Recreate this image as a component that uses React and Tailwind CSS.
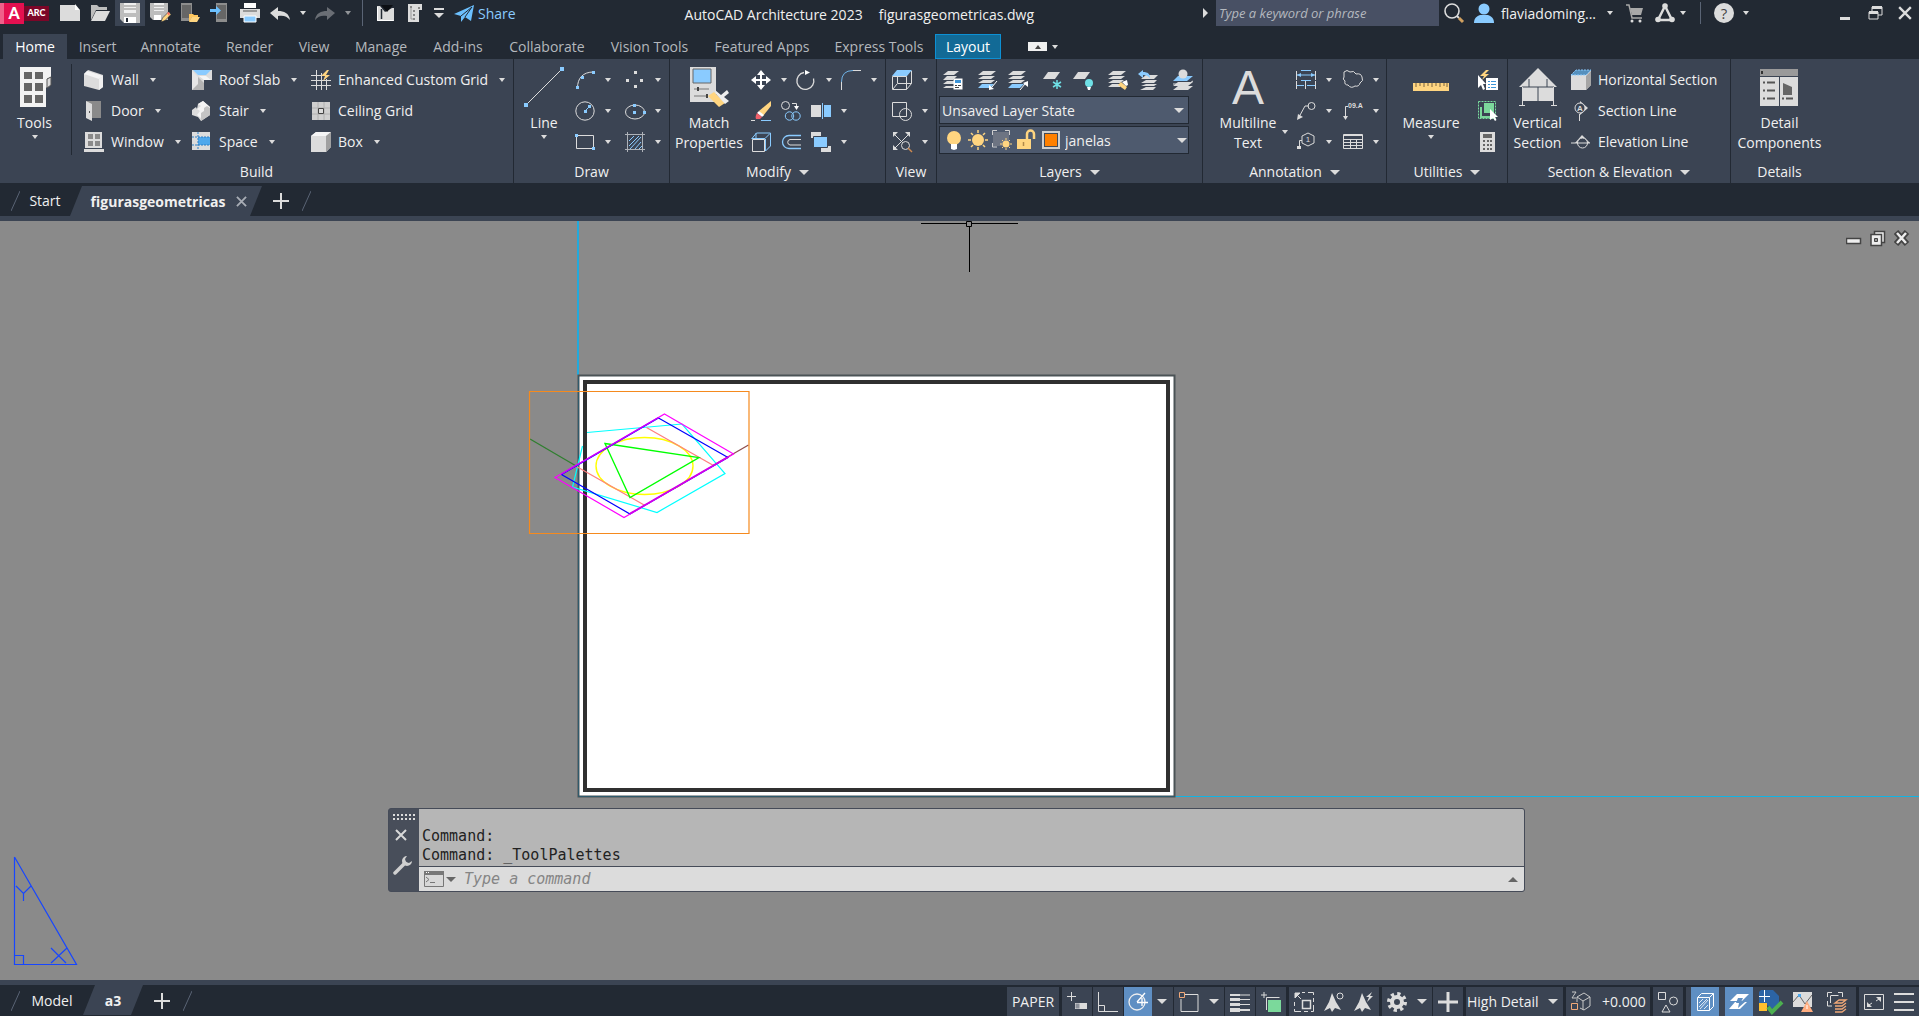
import { useState } from 'react';

const L = '#dcdcdc';
const B = '#8acbff';
const Y = '#ffd580';

// Small drawings, all on a 20 x 20 grid
const ICONS = {
    newFile: (
        <g>
            <path d="M0 2h15v5h5v11H0z" fill={L} />
            <path d="M15 1l5 6h-5z" fill="#fff" />
        </g>
    ),
    open: (
        <g>
            <path d="M1 17V2h6l2 2h8v3H6z" fill="#bdbdbd" />
            <path d="M6 8h14l-5 10H1z" fill={L} />
        </g>
    ),
    save: (
        <g>
            <path d="M0 0h20v20H4l-4-4z" fill="#bdbdbd" />
            <path d="M4 0h12v10H4z" fill="#efefef" />
            <path d="M4 3h12M4 6h12" stroke="#8b8b8b" />
            <path d="M4 14h12v6H4z" fill="#fff" />
            <path d="M6 15h2v4H6z" fill="#222933" />
        </g>
    ),
    saveAs: (
        <g>
            <path d="M0 0h18v17H3l-3-3z" fill="#bdbdbd" />
            <path d="M4 0h10v8H4z" fill="#efefef" />
            <path d="M4 3h10M4 6h10" stroke="#8b8b8b" />
            <path d="M4 12h7v5H4z" fill="#fff" />
            <path d="M11 19l1.500-4 6-6 2.500 2.500-6 6z" fill={Y} stroke="#222933" strokeWidth=".6" />
            <path d="M17 10l2-1 1 2-1.500 1.500z" fill="#ff6f61" />
        </g>
    ),
    openDevice: (
        <g>
            <path d="M1 0h11v18H1z" fill="#8d8d8d" />
            <path d="M2 2h9v13H2z" fill="#666" />
            <path d="M9 11h4l1 1h4v2h-6l-3 5z" fill="#ffc75e" />
            <path d="M12 14h8l-3 5H9z" fill={Y} />
        </g>
    ),
    saveDevice: (
        <g>
            <path d="M6 0h11v19H6z" fill="#8d8d8d" />
            <path d="M7 2h9v14H7z" fill="#666" />
            <path d="M0 6h6V3l5 4.500L6 12V9H0z" fill="#6cc0ff" />
        </g>
    ),
    print: (
        <g>
            <path d="M4 0h12v5H4z" fill="#fff" />
            <path d="M0 6h20v9H0z" fill={L} />
            <path d="M3 8h14" stroke="#555" />
            <path d="M4 13h12v6H4z" fill={B} stroke="#fff" />
        </g>
    ),
    undo: <path d="M0 10l8-6v4c6 0 11 2 12 9-3-4-7-5-12-4v4z" fill={L} />,
    redo: <path d="M20 10l-8-6v4C6 8 1 10 0 17c3-4 7-5 12-4v4z" fill="#6a6e75" />,
    book: (
        <g>
            <path d="M2 3h3l5 6 7-4h2v13H2z" fill={L} />
            <path d="M6 2h12l-6 7z" fill="#0c0f14" />
            <path d="M6.500 6v10" stroke="#222933" strokeWidth="1.500" />
            <path d="M2.500 4v13.500h16" stroke="#fff" fill="none" />
        </g>
    ),
    sheet: (
        <g>
            <path d="M3 1h14v6h-3v12H3z" fill={L} />
            <path d="M5 3h2v2H5zM8 7h2v2H8zM8 11h2v2H8zM8 15h2v2H8zM13 4h2v2h-2z" fill="#888" />
            <path d="M6 5v11h2" stroke="#999" fill="none" />
        </g>
    ),
    share: (
        <g>
            <path d="M0 10L20 1l-3 16-6-4-4 5v-6z" fill="#6cc0ff" />
            <path d="M7 12L18 3l-7 10" stroke="#222933" fill="none" />
        </g>
    ),
    search: (
        <g>
            <circle cx="8" cy="8" r="7" fill="none" stroke={L} strokeWidth="1.600" />
            <path d="M13 13l2 2" stroke={L} strokeWidth="2" />
            <path d="M15 15l4 4" stroke="#d0a060" strokeWidth="3" />
        </g>
    ),
    user: (
        <g fill={B}>
            <circle cx="10" cy="6" r="5.500" />
            <path d="M0 20c0-5 3-7 6-8h8c3 1 6 3 6 8z" />
        </g>
    ),
    cart: (
        <g>
            <path d="M1 2h3l3 13h10" stroke="#a8a8a8" fill="none" strokeWidth="1.500" />
            <path d="M5 5h13l-2 7H7z" fill="#a8a8a8" />
            <circle cx="7" cy="18" r="1.500" fill={L} />
            <circle cx="15" cy="18" r="1.500" fill={L} />
        </g>
    ),
    triad: (
        <g>
            <path d="M10 3L3 17h14z" fill="none" stroke={L} strokeWidth="2.500" />
            <circle cx="10" cy="3" r="2.800" fill={L} />
            <circle cx="3" cy="16.500" r="2.800" fill={L} />
            <circle cx="17" cy="16.500" r="2.800" fill={L} />
        </g>
    ),
    help: (
        <g>
            <circle cx="10" cy="10" r="10" fill={L} />
            <text x="10" y="15.500" textAnchor="middle" fontFamily="Open Sans" fontSize="15" fill="#444">?</text>
        </g>
    ),
    wall: (
        <g>
            <path d="M0 4L4 0l15 5v12l-4 3-15-4z" fill={L} />
            <path d="M0 4l3-3 16 5-4 3z" fill="#f5f5f5" />
            <path d="M15 9l4-3v11l-4 3z" fill="#f0f0f0" />
        </g>
    ),
    door: (
        <g>
            <path d="M2 0h15v17H8z" fill="#8a8a8a" />
            <path d="M2 0l6 3v17l-6-3z" fill={L} />
            <path d="M5 10h1v2H5z" fill="#555" />
        </g>
    ),
    window: (
        <g>
            <path d="M1 0h17v16H1z" fill={L} />
            <path d="M4 2h5v5H4zM11 2h5v5h-5zM4 9h5v5H4zM11 9h5v5h-5z" fill="#8a8a8a" />
            <path d="M0 17h20v3H0z" fill={L} />
        </g>
    ),
    roof: (
        <g>
            <path d="M0 0h20v10h-8v10H0z" fill={L} />
            <path d="M1 0h18l-5 5H6z" fill={B} />
            <path d="M6 7l6 6v7H0z" fill="#b4b4b4" />
            <path d="M0 1l6 6v7l-6 6z" fill="#e6e6e6" />
            <path d="M7 6h7l5 4h-7z" fill="#f5f5f5" />
        </g>
    ),
    stair: (
        <g>
            <path d="M0 9l4-3 1 2 1-5 5-3 7 6v8l-9 6-3-4-6-2z" fill={L} />
            <path d="M11 0l-5 3 3 2-4 3 3 2-3 4 4 3 9-6V6z" fill="#f4f4f4" />
            <path d="M9 12l3-2V7l3-2 3 2v7l-9 6z" fill="#c4c4c4" />
        </g>
    ),
    space: (
        <g>
            <path d="M0 0h18v18H0z" fill={L} />
            <path d="M6 5h12v8H6z" fill="#4fa8ec" />
            <path d="M6 0v18M0 5h18M0 13h18" stroke="#2e7fc4" strokeDasharray="2 1" />
        </g>
    ),
    customGrid: (
        <g>
            <path d="M5.500 0v20M10.500 3v17M15.500 9v11M0 5.500h12M0 10.500h20M0 15.500h20" stroke={L} />
            <path d="M16 0l-6 6h4l-2 5 7-6h-4l3-5z" fill={Y} />
        </g>
    ),
    ceiling: (
        <g>
            <path d="M1 1h18v18H1z" fill="#cfcfcf" />
            <path d="M7 1v18M13 1v18M1 7h18M1 13h18" stroke="#b0b0b0" />
            <path d="M7.500 7.500h5v5h-5z" fill="#ddd" stroke="#444" />
        </g>
    ),
    box: (
        <g>
            <path d="M0 4l5-4h15v15l-5 5H0z" fill={L} />
            <path d="M0 4l5-4h15l-5 4z" fill="#f5f5f5" />
            <path d="M15 4l5-4v15l-5 5z" fill="#a0a0a0" />
        </g>
    ),
    arc: (
        <g>
            <path d="M2.500 18C2.500 8 8 2 18.500 2" stroke={L} fill="none" />
            <path d="M1 16h3v3H1zM6 6h3v3H6zM17 1h3v3h-3z" fill={B} />
        </g>
    ),
    points: <path d="M9 1h3v3H9zM1 9h3v3H1zM15 9h3v3h-3zM9 15h3v3H9z" fill={L} />,
    circle: (
        <g>
            <circle cx="10" cy="10" r="9.200" stroke={L} fill="none" />
            <path d="M10 10l4-4" stroke={B} />
            <path d="M9 9h3v3H9zM13 4h3v3h-3z" fill={B} />
        </g>
    ),
    ellipse: (
        <g>
            <ellipse cx="10" cy="11" rx="9.500" ry="7" stroke={L} fill="none" />
            <path d="M8 3h3v3H8zM8 10h3v3H8zM18 10h3v3h-3z" fill={B} />
        </g>
    ),
    rect: (
        <g>
            <path d="M1.500 3.500h17v13h-17z" stroke={L} fill="none" />
            <path d="M0 2h3v3H0zM17 15h3v3h-3z" fill={B} />
        </g>
    ),
    hatch: (
        <g>
            <path d="M2.500 0v20M17.500 0v20M0 2.500h20M0 17.500h20" stroke="#aeb2b8" />
            <path d="M4 9l5-5M4 14L14 4M5 17L16 5M10 17l6-7M14 17l3-3" stroke={B} />
        </g>
    ),
    move: <path d="M10 0l4 5h-3v4h4V6l5 4-5 4v-3h-4v4h3l-4 5-4-5h3v-4H5v3l-5-4 5-4v3h4V5H6z" fill="#fff" />,
    rotate: (
        <g>
            <path d="M8 2.500a8.500 8.500 0 1 0 9.500 6" stroke={L} fill="none" strokeWidth="1.300" />
            <path d="M9 0l5 2.500L9 5z" fill="#fff" />
        </g>
    ),
    fillet: (
        <g fill="none">
            <path d="M.5 20v-8M12 .5h8" stroke={L} />
            <path d="M.5 12Q.5 .5 12 .5" stroke="#6fb4e8" />
        </g>
    ),
    erase: (
        <g>
            <path d="M8 10l12-10v5L12 15z" fill={Y} />
            <path d="M8 10l5 4-2 2-5-4z" fill="#fff" />
            <path d="M6 12l5 4-2 2H5c-1-2 0-4 1-6z" fill="#f0606a" />
            <path d="M0 19.500h4" stroke={L} />
            <path d="M10 19.500h10" stroke={B} />
        </g>
    ),
    copy: (
        <g fill="none">
            <circle cx="4.500" cy="4.500" r="4" stroke={L} />
            <path d="M11 2.500h4.500V6" stroke={L} />
            <path d="M13 5h5l-2.500 4z" fill="#fff" />
            <circle cx="8.500" cy="15" r="4.200" stroke={B} />
            <circle cx="15" cy="15" r="4.200" stroke={B} />
        </g>
    ),
    mirror: (
        <g>
            <path d="M0 4h10v12H0z" fill={L} />
            <path d="M13 4h7v12h-7z" fill={B} />
            <path d="M11.500 2v16" stroke={B} />
        </g>
    ),
    boxEdge: (
        <g fill="none">
            <path d="M1.500 7.500h12v12h-12z" stroke={L} />
            <path d="M.5 7l5-6h14v13l-5 5M1 6.500h13l5-5M14.500 7v12M5 1v5" stroke={B} />
        </g>
    ),
    offset: (
        <g fill="none">
            <path d="M20 3.500H8a6.500 6.500 0 0 0 0 13h12" stroke={B} strokeWidth="1.300" />
            <path d="M20 7.500H9a2.800 2.800 0 0 0 0 5.500h11" stroke={L} />
        </g>
    ),
    order: (
        <g>
            <path d="M0 0h10v6H0zM10 14h10v6H10z" fill={L} />
            <path d="M2.500 4.500h14v11h-14z" fill={B} stroke="#3b4453" />
        </g>
    ),
    viewCube: (
        <g>
            <path d="M.5 6.500h14v13H.5zM14.500 19.500l5-6V1M5.500 6v7.500h14M5 14l-4 5" stroke={L} fill="none" />
            <path d="M0 6l5-6h15l-5 6z" fill={B} />
        </g>
    ),
    shapes: (
        <g fill="none" stroke={L}>
            <path d="M.5 1.500h14v14H.5z" />
            <circle cx="13.500" cy="13.500" r="6" />
        </g>
    ),
    zoomAll: (
        <g>
            <path d="M2 2l14 14M17 2L3 16" stroke={L} />
            <path d="M1 0h5L1 5zM18 0h-5l5 5zM1 18h5l-5-5z" fill={L} />
            <circle cx="13.500" cy="13.500" r="4" stroke={L} fill="#3b4453" />
            <path d="M16 16l4 4" stroke="#d08a50" strokeWidth="1.500" />
        </g>
    ),
    layerProps: (
        <g>
            <path d="M5 1h11l-5 4H0zM4 6h10l-4 4H0zM4 11h7v3H0zM3 16h8v2H0z" fill={L} />
            <path d="M10.500 8.500h9v11h-9z" fill="#fff" />
            <path d="M12 10h6v3h-6z" fill="#3d94d6" />
            <path d="M12 15.500h2M15 15.500h3M12 17.500h4" stroke="#444" />
        </g>
    ),
    layerIn: (
        <g>
            <path d="M5 1h13l-5 4H0zM5 6h12l-4 3H0zM5 10h12l-4 3H0z" fill={L} />
            <path d="M4 14h12l-4 4H0z" fill={B} />
            <path d="M19 11l-5 6" stroke="#fff" />
            <path d="M11 20v-5l5 4z" fill="#fff" />
        </g>
    ),
    layerOut: (
        <g>
            <path d="M5 1h13l-5 4H0zM5 6h12l-4 3H0zM5 10h12l-4 3H0z" fill={L} />
            <path d="M4 14h12l-4 4H0z" fill={B} />
            <path d="M12 20l5-6" stroke="#fff" />
            <path d="M20 11v6l-5-4z" fill="#fff" />
        </g>
    ),
    layerFreeze: (
        <g>
            <path d="M5 2h12l-5 7H0z" fill={L} />
            <path d="M14 10v9M10 12l8 5M18 12l-8 5" stroke="#6fe0e6" strokeWidth="1.500" />
        </g>
    ),
    layerOff: (
        <g>
            <path d="M5 2h12l-5 7H0z" fill={L} />
            <circle cx="16" cy="13" r="4" fill="#6fe0e6" />
            <path d="M14 17h4l-1 3h-2z" fill="#fff" />
        </g>
    ),
    layerMatch: (
        <g>
            <path d="M5 1h13l-5 4H0zM5 6h12l-4 3H0zM5 10h11l-4 3H0zM4 14h8v3H0z" fill={L} />
            <path d="M10 15l3-3 6 5-2 3z" fill={Y} />
            <path d="M14 12l5-2 1 5-2 1z" fill="#fff" />
        </g>
    ),
    layerPrev: (
        <g>
            <path d="M8 5h12l-4 4H3zM8 10h11l-3 3H3zM8 14h11l-3 2H3zM8 17h10l-3 3H2z" fill={L} />
            <path d="M0 4l5-4v2c5 0 7 2 7 6-2-2-4-3-7-3v3z" fill={B} />
        </g>
    ),
    layerCurrent: (
        <g>
            <path d="M5 12h15l-5 4H0zM5 16h15l-5 4H0z" fill={L} />
            <path d="M5 6h15l-6 5H0z" fill={B} />
            <path d="M0 14h15l5-3" stroke={L} fill="none" />
            <circle cx="10" cy="4" r="4.500" fill={L} />
        </g>
    ),
    bulb: (
        <g>
            <circle cx="10" cy="8" r="7" fill={Y} />
            <path d="M7 14h6v5l-3 1-3-1z" fill="#fff" />
        </g>
    ),
    sun: (
        <g>
            <circle cx="10" cy="10" r="6" fill={Y} />
            <path d="M10 0v3M10 17v3M0 10h3M17 10h3M3 3l2 2M15 15l2 2M17 3l-2 2M5 15l-2 2" stroke={Y} strokeWidth="1.500" />
        </g>
    ),
    vpFreeze: (
        <g>
            <path d="M1 2h16v14H1z" fill="#6d7482" />
            <path d="M.5 5V.5H5M13 .5h4.500V5M.500 13v4H5" stroke="#cfcfcf" fill="none" />
            <circle cx="14" cy="14" r="3.500" fill={Y} />
            <path d="M14 8v2M14 18v2M8 14h2M18 14h2M10 10l1 1M17 17l1 1M18 10l-1 1M11 17l-1 1" stroke={Y} />
        </g>
    ),
    lock: (
        <g>
            <path d="M1 9h14v10H1z" fill={Y} />
            <path d="M11 9V4a3 3 0 0 1 7 0v5" stroke={Y} strokeWidth="2.500" fill="none" />
            <path d="M7.500 12v4" stroke="#b0894a" strokeWidth="1.500" />
        </g>
    ),
    dim: (
        <g>
            <path d="M.5 1v9M19.500 1v9M.5 11v8M9.500 11v8M19.500 11v8" stroke={L} />
            <path d="M1 5h18M1 15.500h7M11 15.500h8M5 .5h10M5 10.500h10" stroke={B} />
            <path d="M1 5l4-2v4zM19 5l-4-2v4z" fill={B} />
        </g>
    ),
    cloud: (
        <path
            d="M1 2q3-3 6 0q4-2 6 2q5-1 6 3q2 4-2 6q-1 4-5 3q-4 3-7-1q-4 0-3-4q-3-2-1-4z"
            stroke={L}
            fill="none"
        />
    ),
    leader: (
        <g>
            <path d="M3 16L9 5h4" stroke={L} fill="none" />
            <circle cx="15.500" cy="5" r="3.500" stroke={L} fill="none" />
            <path d="M1 19l1-6 5 3z" fill={L} />
        </g>
    ),
    keynote: (
        <g>
            <path d="M5 5.500H2.500V17" stroke={L} fill="none" />
            <path d="M0 15h5l-2.500 4z" fill={L} />
            <text x="5" y="7" fontFamily="Liberation Sans" fontWeight="bold" fontSize="7" fill={L}>09.A</text>
        </g>
    ),
    tag: (
        <g>
            <path d="M12 1l6 3v7l-6 3-6-3V4zM6 8.500H3.500V16" stroke={L} fill="none" />
            <path d="M1 14h4v3H1z" fill={L} />
            <text x="12" y="10" textAnchor="middle" fontFamily="Liberation Sans" fontSize="8" fill={L}>1</text>
        </g>
    ),
    table: (
        <g fill="none" stroke={L}>
            <path d="M.5 2.500h19v14H.5zM.5 7.500h19M.5 10.500h19M.5 13.500h19M7.500 7v10M13.500 7v10" />
            <path d="M0 3.500h20" />
        </g>
    ),
    quickSelect: (
        <g>
            <path d="M8 0L2 6h4L4 10l7-6H7l4-4z" fill={Y} />
            <path d="M0 5v13l3-3 2 5 2-1-2-5h3z" fill="#fff" />
            <path d="M8 8h12v12H8z" fill="#fff" />
            <path d="M10 11.500h2M10 14.500h2M10 17.500h2M13 11.500h5M13 14.500h5M13 17.500h5" stroke="#3d94d6" />
        </g>
    ),
    selectAll: (
        <g>
            <path d="M.5 .5h17v17H.5z" stroke="#7be0a0" strokeDasharray="2 1" fill="none" />
            <path d="M6 2h10v10H6z" fill="#7bd99b" />
            <path d="M3 6v10h10" stroke="#7bd99b" strokeWidth="2" fill="none" />
            <path d="M12 8v11l3-2 2 3 1.500-1-1.500-3h3z" fill="#fff" />
        </g>
    ),
    calc: (
        <g>
            <path d="M2 0h15v20H2z" fill={L} />
            <path d="M5 2h9v4H5z" fill="#666" />
            <path d="M5 8h2v2H5zM9 8h2v2H9zM12 8h2v2h-2zM5 12h2v2H5zM9 12h2v2H9zM12 12h2v2h-2zM5 16h2v2H5zM9 16h2v2H9zM12 16h2v2h-2z" fill="#666" />
        </g>
    ),
    hSection: (
        <g>
            <path d="M0 5h15l5-5v15l-5 5H0z" fill={L} />
            <path d="M0 5l5-5h15l-5 5z" fill="#5590bd" stroke={B} strokeDasharray="2 1" />
            <path d="M15 6l5-5v14l-5 5z" fill="#a5a5a5" />
        </g>
    ),
    sectionLine: (
        <g>
            <path d="M9 0l8 7-8 7z" fill={L} />
            <circle cx="9" cy="7" r="5" fill="#3b4453" stroke={L} />
            <text x="9" y="10" textAnchor="middle" fontFamily="Liberation Sans" fontWeight="bold" fontSize="8" fill={L}>A</text>
            <path d="M8.500 13v7" stroke={L} />
        </g>
    ),
    elevationLine: (
        <g>
            <path d="M4 11L11 3l8 8z" fill={L} />
            <circle cx="11.500" cy="11" r="5" stroke={L} fill="#3b4453" />
            <path d="M0 11h19" stroke={L} />
        </g>
    ),
    coords: (
        <g>
            <path d="M4.500 0v9M0 4.500h9" stroke={L} />
            <path d="M8 11h12v6H8z" fill={L} />
            <path d="M8.500 11.500h4v5h-4z" fill="#8a8f98" />
        </g>
    ),
    ortho: <path d="M.5 0v19.500H20M.5 13.500h6v6" stroke={L} fill="none" />,
    polar: (
        <g>
            <circle cx="9" cy="10" r="8" stroke="#eee" fill="none" strokeWidth="1.300" />
            <path d="M9 10.500h11M9 10l8-9M14 6v8" stroke="#fff" strokeWidth="1.300" />
        </g>
    ),
    osnap: (
        <g fill="none">
            <path d="M6 2.500h13v17H2V7" stroke={L} />
            <path d="M.5 .5h5v5h-5z" stroke="#f0a878" />
        </g>
    ),
    lineweight: (
        <g fill={L}>
            <path d="M0 2h10v2H0zM10 2.500h10v1H10zM0 6h10v3H0zM10 7h10v1H10zM0 11h10v3H0zM10 12h10v1H10zM0 16h10v4H0zM10 17h10v2H10z" />
        </g>
    ),
    cycling: (
        <g>
            <path d="M3 0v6M0 3h6M5.500 18V5.500h13" stroke={L} fill="none" />
            <path d="M7 8h13v12H7z" fill="#7bd99b" />
        </g>
    ),
    annoScale: (
        <g fill="none" stroke={L}>
            <path d="M8 .5h3M14 .5h5.500V3M19.500 6v4M19.500 13v6.500H17M14 19.500h-4M7 19.500H.5V17M.5 14v-4" />
            <path d="M8.500 8.500h8v8h-8z" strokeWidth="1.500" />
            <path d="M2 2l5 5" />
            <path d="M1 1h5L1 6z" fill={L} />
        </g>
    ),
    annoVisible: (
        <g>
            <path d="M8 1l4 9 5 8-6-2-3 4-2-4-6 3 5-9z" fill={L} />
            <circle cx="16" cy="4" r="3" stroke={L} fill="none" />
        </g>
    ),
    annoAuto: (
        <g>
            <path d="M8 1l4 9 5 8-6-2-3 4-2-4-6 3 5-9z" fill={L} />
            <path d="M18 0l-6 5h3l-2 5 6-6h-3z" fill={L} />
        </g>
    ),
    gear: (
        <g>
            <circle cx="10" cy="10" r="8" fill="none" stroke={L} strokeWidth="4" strokeDasharray="3.140 3.140" />
            <circle cx="10" cy="10" r="5" fill="none" stroke={L} strokeWidth="4" />
        </g>
    ),
    plus: <path d="M10 0v20M0 10h20" stroke={L} strokeWidth="3" />,
    elevation: (
        <g fill="none" stroke="#c8c8c8">
            <path d="M6 5l7-4 6 4v9l-6 4-4-2M6 5l6 4 7-4M12 9v9M6 5v5" />
            <path d="M1 0h4L1 6h4" />
            <path d="M.5 11.500h6v6h-6z" stroke="#f0a878" />
        </g>
    ),
    isolate: (
        <g fill="none" stroke={L}>
            <path d="M.5 .5h7v7h-7zM8 13l4 7H4z" />
            <circle cx="15.500" cy="9" r="4" />
        </g>
    ),
    surface: (
        <g>
            <path d="M2.500 5.500h12v13h-12zM2.500 5.500l4-4h12v13l-4 4M14.500 5.500l4-4" stroke="#fff" fill="none" />
            <path d="M4 11l4-4M4 15l8-8M5 17l8-9M9 17l4-4" stroke="#dfe9f5" />
        </g>
    ),
    xref: (
        <g>
            <path d="M8 2h12l-7 7H1z" fill="#fff" />
            <path d="M6 10h12l-7 7H0z" fill="#fff" />
            <path d="M9 6h5l-2 4h4l-7 6 1-5H7z" fill="#5f8fc3" />
        </g>
    ),
    trusted: (
        <g>
            <path d="M2-2h12l6 6v8l-7 5-5-4H0V0z" fill="#2c64a5" />
            <path d="M5.500-2v12M0 4.500h11" stroke="#fff" />
            <path d="M0 11h8v8H0z" fill="#ffc02e" />
            <path d="M9 15l4 5 10-10" stroke="#4caf50" strokeWidth="4" fill="none" />
        </g>
    ),
    graph: (
        <g>
            <path d="M0 0h19v15H0z" fill={L} />
            <path d="M0 10l6-7 6 9 7-9" stroke="#666" fill="none" />
            <path d="M5 2h3v3H5z" fill="#4fa8ec" />
            <path d="M14 9l6 11H8z" fill="#ffad80" />
            <path d="M14 13v4" stroke="#fff" />
        </g>
    ),
    layout: (
        <g fill="none">
            <path d="M5 .5H.5V5M11 .5h4.500V5M.5 9v5H5M3.500 4v7M3.500 3.500h8" stroke={L} />
            <path d="M12 8h7l-4 3H8zM8 14h7l4-3M8 17h7l4-3M8 20h7l4-3" stroke="#f0a878" strokeWidth="1.300" />
        </g>
    ),
    fullscreen: (
        <g>
            <path d="M.5 2.500h19v15H.5z" stroke={L} fill="none" />
            <path d="M12 5h5v5zM3 10v5h5z" fill={L} />
            <path d="M5 13l3-2M15 7l-3 2" stroke={L} />
        </g>
    ),
    menu: <path d="M0 2h20M0 10h20M0 18h20" stroke={L} strokeWidth="2" />,
};

// Large drawings, 40 x 40 grid
const BIG = {
    tools: (
        <g>
            <path d="M5 0h31v10l-4 2v9l-1-1v20H5z" fill="#f3f3f3" />
            <path d="M9 5h8v7H9zM20 5h8v7h-8zM9 16h8v8H9zM20 16h8v8h-8zM9 28h8v8H9zM20 28h8v8h-8z" fill="#666" />
            <path d="M32 12l4-2v8l-4 3z" fill={L} stroke="#555" />
        </g>
    ),
    line: (
        <g>
            <path d="M2 38L38 2" stroke={L} />
            <path d="M0 36h4v4H0zM36 0h4v4h-4z" fill={B} />
        </g>
    ),
    match: (
        <g>
            <path d="M1 0h26v35H1z" fill={L} />
            <path d="M4 2h18v14H4z" fill={B} stroke="#666" />
            <path d="M5 22h15M5 29h14" stroke="#777" />
            <path d="M8 20h2v4H8zM17 27h2v4h-2z" fill="#444" />
            <path d="M19 29l6-4 11 11-6 4z" fill={Y} />
            <path d="M26 23l6 5 6-5 2 3-5 4 5 4-4 3-9-10z" fill="#eee" />
        </g>
    ),
    text: (
        <text x="20" y="37" textAnchor="middle" fontFamily="Liberation Sans" fontSize="48" fill={L}>A</text>
    ),
    measure: (
        <g>
            <path d="M2 16h36v8H2z" fill={Y} />
            <path d="M5 16v4M9 16v3M13 16v4M17 16v3M21 16v4M25 16v3M29 16v4M33 16v3M36 16v4" stroke="#7a6540" />
        </g>
    ),
    vSection: (
        <g>
            <path d="M1 20L20 1l19 19z" fill={L} />
            <path d="M4 20h32v14H4z" fill={L} />
            <path d="M4 20h32M20 20v14M11 12v8M29 12v8" stroke="#3b4453" />
            <path d="M4.500 20v18M35.500 20v18M1 38.500h6M33 38.500h6" stroke={L} />
        </g>
    ),
    detail: (
        <g>
            <path d="M1 2h38v37H1z" fill={L} />
            <path d="M1 2h38v7H1z" fill="#9a9a9a" />
            <path d="M2 4h2v3H2z" fill="#333" />
            <path d="M1 9.500h38M20.500 9v30" stroke="#3b4453" />
            <path d="M4 15.500h2M8 15.500h8M4 23.500h2M8 23.500h8M4 31.500h2M8 31.500h8M23 31.500h2M27 31.500h7" stroke="#555" strokeWidth="2" />
            <path d="M24 16l9 4v8h-9z" fill="#666" />
        </g>
    ),
};

function Icon({ name }) {
    return (
        <svg viewBox="0 0 20 20" className="size-5 shrink-0 overflow-visible" aria-hidden="true">
            {ICONS[name]}
        </svg>
    );
}

function Caret({ large }) {
    return large ? (
        <svg viewBox="0 0 10 5" className="h-[5px] w-[10px] shrink-0" aria-hidden="true">
            <path d="M0 0h10L5 5z" fill={L} />
        </svg>
    ) : (
        <svg viewBox="0 0 6 4" className="h-1 w-1.5 shrink-0" aria-hidden="true">
            <path d="M0 0h6L3 4z" fill={L} />
        </svg>
    );
}

function Close({ className }) {
    return (
        <svg viewBox="0 0 12 12" className={className} aria-hidden="true">
            <path d="M1 1l10 10M11 1L1 11" stroke="currentColor" strokeWidth="2" />
        </svg>
    );
}

function BarButton({ icon, label, active }) {
    return (
        <button
            type="button"
            aria-label={label}
            className={`flex h-[26px] w-[30px] shrink-0 items-center justify-center ${active ? 'bg-[#3b4453]' : ''}`}
        >
            <Icon name={icon} />
        </button>
    );
}

function TitleBar() {
    return (
        <header className="flex h-[34px] items-start bg-[#222933]">
            <div className="flex h-[26px] w-[55px] shrink-0 items-center" aria-label="Autodesk">
                <span className="flex h-[21px] w-6 items-center justify-center border-l-4 border-[#f0608a] bg-[#e51050] font-['Lato'] text-base font-black text-white">
                    A
                </span>
                <span className="flex h-[15px] w-[25px] items-center justify-center bg-[#7c0628] font-['Lato'] text-[9px] font-black text-white">
                    ARC
                </span>
            </div>
            <div className="flex h-[26px] shrink-0 items-center">
                <BarButton icon="newFile" label="New" />
                <BarButton icon="open" label="Open" />
                <BarButton icon="save" label="Save" active />
                <BarButton icon="saveAs" label="Save As" />
                <BarButton icon="openDevice" label="Open from Web & Mobile" />
                <BarButton icon="saveDevice" label="Save to Web & Mobile" />
                <BarButton icon="print" label="Plot" />
                <BarButton icon="undo" label="Undo" />
                <button type="button" aria-label="Undo list" className="flex w-[15px] justify-center">
                    <Caret />
                </button>
                <BarButton icon="redo" label="Redo" />
                <button type="button" aria-label="Redo list" className="flex w-[15px] justify-center opacity-60">
                    <Caret />
                </button>
                <span className="mx-[7px] h-[26px] w-px bg-[#5a6475]" />
                <BarButton icon="book" label="Project Browser" />
                <BarButton icon="sheet" label="Project Navigator" />
                <button type="button" aria-label="Customize toolbar" className="flex w-[18px] flex-col items-center gap-[3px]">
                    <span className="h-[2px] w-[10px] bg-[#dcdcdc]" />
                    <Caret large />
                </button>
                <button type="button" className="ml-[6px] flex items-center gap-1 pt-px text-[14px] text-[#8acbff]">
                    <Icon name="share" />
                    Share
                </button>
            </div>
            <h1 className="flex h-[28px] min-w-0 flex-1 items-center justify-center gap-4 text-[14px] whitespace-nowrap text-[#f0f0f0]">
                <span>AutoCAD Architecture 2023</span>
                <span>figurasgeometricas.dwg</span>
            </h1>
            <div className="flex h-[26px] shrink-0 items-center">
                <svg viewBox="0 0 5 10" className="mr-2 h-[10px] w-[5px]" aria-hidden="true">
                    <path d="M0 0l5 5-5 5z" fill={L} />
                </svg>
                <input
                    type="text"
                    aria-label="Search"
                    placeholder="Type a keyword or phrase"
                    className="h-[26px] w-[223px] bg-[#485064] px-[3px] text-[13px] text-white italic outline-none placeholder:text-[#b4b8bf]"
                />
                <BarButton icon="search" label="Search" />
                <BarButton icon="user" label="Account" />
                <button type="button" className="flex items-center pl-[2px] text-[14px] text-[#f0f0f0]">
                    <span className="w-[106px] text-left">flaviadoming...</span>
                    <Caret />
                </button>
                <div className="ml-[7px] flex items-center">
                    <BarButton icon="cart" label="App store" />
                    <BarButton icon="triad" label="Autodesk apps" />
                    <Caret />
                    <span className="mr-2 ml-[14px] h-[22px] w-px bg-[#5a6475]" />
                    <BarButton icon="help" label="Help" />
                    <span className="w-1" />
                    <Caret />
                </div>
                <div className="ml-[81px] flex items-center text-[#dcdcdc]">
                    <button type="button" aria-label="Minimize" className="flex h-[26px] w-[30px] items-end justify-center pb-[6px]">
                        <span className="h-[3px] w-[10px] bg-[#dcdcdc]" />
                    </button>
                    <button type="button" aria-label="Restore" className="flex h-[26px] w-[30px] items-center justify-center">
                        <svg viewBox="0 0 15 14" className="h-[14px] w-[15px]" aria-hidden="true">
                            <path d="M4 5V1h10v8h-4" stroke={L} fill="none" />
                            <path d="M4 1.500h10M1 6.500h9" stroke={L} strokeWidth="3" />
                            <path d="M1 6h9v7H1z" stroke={L} fill="none" />
                        </svg>
                    </button>
                    <button type="button" aria-label="Close" className="flex h-[26px] w-[29px] items-center justify-center">
                        <Close className="size-[14px]" />
                    </button>
                </div>
            </div>
        </header>
    );
}

const TABS = [
    ['Home', 'w-16'],
    ['Insert', 'w-[61px]'],
    ['Annotate', 'w-[85px]'],
    ['Render', 'w-[73px]'],
    ['View', 'w-14'],
    ['Manage', 'w-[78px]'],
    ['Add-ins', 'w-[76px]'],
    ['Collaborate', 'w-[102px]'],
    ['Vision Tools', 'w-[103px]'],
    ['Featured Apps', 'w-[122px]'],
    ['Express Tools', 'w-[112px]'],
];

function RibbonTabs({ tab, onTab }) {
    return (
        <nav className="flex h-[25px] items-stretch bg-[#222933] pl-[3px] text-[14px] whitespace-nowrap text-[#b4b8bd]">
            {TABS.map(([name, width]) => (
                <button
                    key={name}
                    type="button"
                    onClick={() => onTab(name)}
                    className={`flex shrink-0 items-center justify-center ${width} ${tab === name ? 'bg-[#3b4453] text-white' : ''}`}
                >
                    {name}
                </button>
            ))}
            <button type="button" className="flex w-[66px] shrink-0 items-center justify-center border border-[#0d90d4] bg-[#126a96] text-white">
                Layout
            </button>
            <button type="button" aria-label="Minimize ribbon" className="ml-[27px] flex items-center gap-[5px]">
                <span className="flex h-[9px] w-[19px] items-center justify-center bg-[#f0f0f0]">
                    <svg viewBox="0 0 6 4" className="h-1 w-1.5" aria-hidden="true">
                        <path d="M0 4h6L3 0z" fill="#444" />
                    </svg>
                </span>
                <Caret />
            </button>
        </nav>
    );
}

function Panel({ title, expand, width, children }) {
    return (
        <section className={`flex shrink-0 flex-col border-r border-[#222933] ${width}`}>
            <div className="flex h-[99px]">{children}</div>
            <h2 className="flex items-center justify-center gap-2 pt-1 text-[14px] leading-5">
                {title}
                {expand && <Caret large />}
            </h2>
        </section>
    );
}

function BigButton({ icon, lines, caret, width }) {
    return (
        <button type="button" className={`flex shrink-0 flex-col items-center pt-2 text-[14px] leading-5 ${width}`}>
            <svg viewBox="0 0 40 40" className="mb-[6px] size-10 overflow-visible" aria-hidden="true">
                {BIG[icon]}
            </svg>
            {lines.map((line) => (
                <span key={line}>{line}</span>
            ))}
            {caret && (
                <span className="mt-[2px]">
                    <Caret />
                </span>
            )}
        </button>
    );
}

// Icon with a drop-down arrow to its right; the cell width sets the pitch
function Tool({ icon, label, caret, width }) {
    return (
        <button type="button" aria-label={label} className={`flex h-[31px] shrink-0 items-center gap-[10px] ${width}`}>
            <Icon name={icon} />
            {caret && <Caret />}
        </button>
    );
}

function TextTool({ icon, label, caret }) {
    return (
        <button type="button" className="flex h-[31px] items-center text-[14px] whitespace-nowrap">
            <Icon name={icon} />
            <span className="ml-[7px]">{label}</span>
            {caret && (
                <span className="ml-[11px]">
                    <Caret />
                </span>
            )}
        </button>
    );
}

function Ribbon() {
    return (
        <div className="flex h-[124px] overflow-hidden bg-[#3b4453] text-[#f0f0f0]">
            <Panel title="Build" width="w-[514px]">
                <BigButton icon="tools" lines={['Tools']} caret width="w-[68px] pl-[1px]" />
                <div className="mt-[5px] ml-[3px] h-[91px] w-px bg-[#222933]" />
                <div className="mt-[5px] grid h-[93px] grid-cols-[108px_119px_auto] pl-3">
                    <TextTool icon="wall" label="Wall" caret />
                    <TextTool icon="roof" label="Roof Slab" caret />
                    <TextTool icon="customGrid" label="Enhanced Custom Grid" caret />
                    <TextTool icon="door" label="Door" caret />
                    <TextTool icon="stair" label="Stair" caret />
                    <TextTool icon="ceiling" label="Ceiling Grid" />
                    <TextTool icon="window" label="Window" caret />
                    <TextTool icon="space" label="Space" caret />
                    <TextTool icon="box" label="Box" caret />
                </div>
            </Panel>
            <Panel title="Draw" width="w-[156px]">
                <BigButton icon="line" lines={['Line']} caret width="w-[60px]" />
                <div className="mt-[5px] grid h-[93px] grid-cols-[50px_45px] pl-[1px]">
                    <Tool icon="arc" label="Arc" caret />
                    <Tool icon="points" label="Point" caret />
                    <Tool icon="circle" label="Circle" caret />
                    <Tool icon="ellipse" label="Ellipse" caret />
                    <Tool icon="rect" label="Rectangle" caret />
                    <Tool icon="hatch" label="Hatch" caret />
                </div>
            </Panel>
            <Panel title="Modify" expand width="w-[216px]">
                <BigButton icon="match" lines={['Match', 'Properties']} width="w-[78px]" />
                <div className="mt-[5px] pl-[3px]">
                    <div className="flex">
                        <Tool icon="move" label="Move" caret width="w-[45px]" />
                        <Tool icon="rotate" label="Rotate" caret width="w-[45px]" />
                        <Tool icon="fillet" label="Fillet" caret width="w-[45px]" />
                    </div>
                    <div className="flex">
                        <Tool icon="erase" label="Erase" width="w-[30px]" />
                        <Tool icon="copy" label="Copy" width="w-[30px]" />
                        <Tool icon="mirror" label="Mirror" caret width="w-[45px]" />
                    </div>
                    <div className="flex">
                        <Tool icon="boxEdge" label="Explode" width="w-[30px]" />
                        <Tool icon="offset" label="Offset" width="w-[30px]" />
                        <Tool icon="order" label="Draw order" caret width="w-[45px]" />
                    </div>
                </div>
            </Panel>
            <Panel title="View" width="w-[51px]">
                <div className="mt-[5px] pl-[6px]">
                    <Tool icon="viewCube" label="View direction" caret />
                    <Tool icon="shapes" label="Visual style" caret />
                    <Tool icon="zoomAll" label="Zoom extents" caret />
                </div>
            </Panel>
            <Panel title="Layers" expand width="w-[266px]">
                <div className="mt-[5px] w-[252px] pl-[2px]">
                    <div className="flex pl-1">
                        <Tool icon="layerProps" label="Layer Properties" width="w-[35px]" />
                        <Tool icon="layerIn" label="Make Current" width="w-[30px]" />
                        <Tool icon="layerOut" label="Match Layer" width="w-[35px]" />
                        <Tool icon="layerFreeze" label="Freeze" width="w-[30px]" />
                        <Tool icon="layerOff" label="Off" width="w-[35px]" />
                        <Tool icon="layerMatch" label="Match" width="w-[30px]" />
                        <Tool icon="layerPrev" label="Previous" width="w-[35px]" />
                        <Tool icon="layerCurrent" label="Isolate" width="w-5" />
                    </div>
                    <div className="mt-px flex h-7 items-center border border-[#222933] bg-[#4e5a6e] pr-1">
                        <select aria-label="Layer state" className="min-w-0 flex-1 appearance-none bg-transparent pl-[2px] text-[14px] outline-none">
                            <option>Unsaved Layer State</option>
                        </select>
                        <Caret large />
                    </div>
                    <div className="mt-[2px] flex h-7 items-center gap-1 border border-[#222933] bg-[#4e5a6e] pr-px pl-1">
                        <Icon name="bulb" />
                        <Icon name="sun" />
                        <Icon name="vpFreeze" />
                        <Icon name="lock" />
                        <svg viewBox="0 0 18 18" className="ml-[2px] size-[18px] shrink-0" aria-hidden="true">
                            <path d="M1 1h16v16H1z" fill="#444b58" stroke="#d0d0d0" strokeWidth="2" />
                            <path d="M3 3h12v12H3z" fill="#ff8000" />
                        </svg>
                        <select aria-label="Layer" className="min-w-0 flex-1 appearance-none bg-transparent pl-px text-[14px] outline-none">
                            <option>janelas</option>
                        </select>
                        <Caret large />
                    </div>
                </div>
            </Panel>
            <Panel title="Annotation" expand width="w-[184px]">
                <BigButton icon="text" lines={['Multiline', 'Text']} width="w-[78px] pl-3" />
                <div className="flex w-[15px] items-end pb-6 pl-px">
                    <Caret />
                </div>
                <div className="mt-[5px] grid h-[93px] grid-cols-[47px_40px]">
                    <Tool icon="dim" label="Dimension" caret />
                    <Tool icon="cloud" label="Revision cloud" caret />
                    <Tool icon="leader" label="Leader" caret />
                    <Tool icon="keynote" label="Keynote" caret />
                    <Tool icon="tag" label="Tag" caret />
                    <Tool icon="table" label="Table" caret />
                </div>
            </Panel>
            <Panel title="Utilities" expand width="w-[121px]">
                <BigButton icon="measure" lines={['Measure']} caret width="w-[88px]" />
                <div className="mt-[5px] pl-[3px]">
                    <Tool icon="quickSelect" label="Quick Select" />
                    <Tool icon="selectAll" label="Select All" />
                    <Tool icon="calc" label="Calculator" />
                </div>
            </Panel>
            <Panel title="Section & Elevation" expand width="w-[223px]">
                <BigButton icon="vSection" lines={['Vertical', 'Section']} width="w-[59px]" />
                <div className="mt-[5px] pl-1">
                    <TextTool icon="hSection" label="Horizontal Section" />
                    <TextTool icon="sectionLine" label="Section Line" />
                    <TextTool icon="elevationLine" label="Elevation Line" />
                </div>
            </Panel>
            <section className="flex w-[97px] shrink-0 flex-col">
                <div className="flex h-[99px] justify-center">
                    <BigButton icon="detail" lines={['Detail', 'Components']} />
                </div>
                <h2 className="flex items-center justify-center pt-1 text-[14px] leading-5">Details</h2>
            </section>
        </div>
    );
}

function Slash() {
    return (
        <svg viewBox="0 0 9 20" className="h-5 w-[9px] shrink-0" aria-hidden="true">
            <path d="M0 20L9 0" stroke="#5a6475" />
        </svg>
    );
}

function Plus() {
    return (
        <svg viewBox="0 0 16 16" className="size-4" aria-hidden="true">
            <path d="M8 0v16M0 8h16" stroke={L} strokeWidth="2" />
        </svg>
    );
}

function DocTabs() {
    return (
        <nav className="flex h-[38px] items-center border-b-[5px] border-[#3b4453] bg-[#222933] pt-[2px] pl-[11px] text-[14px] text-[#f0f0f0]">
            <Slash />
            <button type="button" className="w-[50px]">Start</button>
            <div className="flex h-[30px] w-[192px] items-center justify-center gap-[11px] self-end bg-[#3b4453] pl-[6px] font-bold [clip-path:polygon(12px_0,100%_0,calc(100%-12px)_100%,0_100%)]">
                figurasgeometricas
                <button type="button" aria-label="Close figurasgeometricas" className="text-[#a8adb5]">
                    <Close className="size-[11px]" />
                </button>
            </div>
            <button type="button" aria-label="New drawing" className="mr-[13px] ml-[11px]">
                <Plus />
            </button>
            <Slash />
        </nav>
    );
}

function Drawing() {
    return (
        <svg className="block size-full" aria-label="Paper space drawing">
            <g transform="translate(0 -221)" fill="none">
                <path d="M578 221v154" stroke="#22aadd" strokeWidth="2" />
                <path d="M1174 796.500h9999" stroke="#12b4e4" />
                <path d="M578.500 375.500h596v421h-596z" fill="#fff" stroke="#4b5356" strokeWidth="2" />
                <path d="M578.500 376v420.500h596" stroke="#2f5a6b" />
                <path d="M585 382h583v408H585z" stroke="#303030" strokeWidth="4" />
                <path d="M587 432.500l95-8.500 43 49.500-68 39-84.500-25.500 10-41" stroke="#00ffff" strokeWidth="1.200" />
                <ellipse cx="644.500" cy="466" rx="48.500" ry="28.500" stroke="#ffff00" strokeWidth="1.400" />
                <path d="M646.500 427.500l67 38M576.500 466.500l68.500 39" stroke="#ff7f7f" strokeWidth="1.300" />
                <path d="M605 443.500l94 14-69 40z" stroke="#00ff00" strokeWidth="1.300" />
                <path d="M530 439l47 27.500" stroke="#2f7f2f" strokeWidth="1.300" />
                <path d="M713 465.500l35.500-20.500" stroke="#8f4f4f" strokeWidth="1.300" />
                <path d="M658.500 418l69.500 39.500-98 56.500-68.500-39.500z" stroke="#0000ff" strokeWidth="1.200" />
                <path d="M664.500 414l69 40L624 517.500l-69-40z" stroke="#ff00ff" strokeWidth="1.200" />
                <path d="M561.500 474l97-56.500" stroke="#c000ff" strokeWidth="1.300" />
                <path d="M630 513.500l98-56.500" stroke="#d000e8" strokeWidth="1.500" />
                <path d="M529.500 391.500h219.500v142H529.500z" stroke="#f58a1e" strokeWidth="1.200" />

                <path d="M921 223.500h45M972 223.500h46M969.500 227v45M966.500 221.500h5v5h-5z" stroke="#000" />
                <g stroke="#1746ff" strokeWidth="1.200">
                    <path d="M14.500 857v107.500h62L14.500 857" />
                    <path d="M14.500 955.500h9v9M16 886l7.500 7.500 7.500-7.500M23.500 893v8M51 948l15 15M51 963l16-15" />
                </g>
            </g>
        </svg>
    );
}

function ViewControls() {
    return (
        <div className="absolute top-[9px] right-2 flex items-center gap-[7px]">
            <button type="button" aria-label="Minimize drawing">
                <svg viewBox="0 0 17 18" className="h-[18px] w-[17px]" aria-hidden="true">
                    <path d="M.5 8.500h14v5H.5z" fill="#eee" stroke="#444" strokeWidth="1.500" />
                </svg>
            </button>
            <button type="button" aria-label="Restore drawing">
                <svg viewBox="0 0 17 18" className="h-[18px] w-[17px]" aria-hidden="true">
                    <path d="M4.500 1.500h10v11h-10z" fill="#eee" stroke="#444" strokeWidth="1.500" />
                    <path d="M1 4.500h10.500v11H1z" fill="#eee" stroke="#444" strokeWidth="1.500" />
                    <path d="M4.500 8.500h3v3h-3z" fill="#999" stroke="#444" />
                </svg>
            </button>
            <button type="button" aria-label="Close drawing">
                <svg viewBox="0 0 17 18" className="h-[18px] w-[17px]" aria-hidden="true">
                    <path d="M2 2l11 12M13 2L2 14" stroke="#444" strokeWidth="6" />
                    <path d="M3 3l9 10M12 3L3 13" stroke="#eee" strokeWidth="2.500" />
                </svg>
            </button>
        </div>
    );
}

function CommandWindow() {
    return (
        <div className="absolute right-[394px] bottom-[88px] left-[388px] flex h-[84px] overflow-hidden rounded-[3px] border border-[#454b58] bg-[#484e5a] font-['DejaVu_Sans_Mono','Liberation_Mono',monospace] text-[15px]">
            <div className="flex w-[30px] shrink-0 flex-col items-center pt-[5px] text-[#d8d8d8]">
                <svg viewBox="0 0 22 6" className="h-[6px] w-[22px]" aria-hidden="true">
                    <path d="M0 1h22M0 5h22" stroke="#dcdcdc" strokeWidth="2" strokeDasharray="2 2" />
                </svg>
                <button type="button" aria-label="Close command line" className="mt-[9px] mr-[6px]">
                    <Close className="size-3" />
                </button>
                <button type="button" aria-label="Customize command line" className="mt-[14px] mr-[2px]">
                    <svg viewBox="0 0 20 20" className="size-5" aria-hidden="true">
                        <path d="M2 18L12 8" stroke="#d0d0d0" strokeWidth="3.500" strokeLinecap="round" />
                        <path d="M14 1a5 5 0 1 0 5 5l-3 2-3-1-1-3z" fill="#d0d0d0" />
                    </svg>
                </button>
            </div>
            <div className="flex min-w-0 flex-1 flex-col">
                <div className="flex flex-1 flex-col justify-end bg-[#b6b6b6] px-[3px] pb-px leading-[19px] text-[#222]">
                    <p>Command:</p>
                    <p>Command: _ToolPalettes</p>
                </div>
                <div className="flex h-[25px] items-center border-t border-[#454b58] bg-[#dcdcdc] pl-[5px] pr-[6px]">
                    <svg viewBox="0 0 20 16" className="h-4 w-5 shrink-0" aria-hidden="true">
                        <path d="M.5 .5h19v15H.5z" fill="#d8d8d8" stroke="#777" />
                        <path d="M0 0h20v4H0z" fill="#777" />
                        <path d="M2 6l3 2.500-3 2.500M6 11.500h5" stroke="#777" fill="none" />
                        <path d="M2 1h1v1H2zM4 1h1v1H4z" fill="#fff" />
                    </svg>
                    <svg viewBox="0 0 10 5" className="ml-[2px] h-[5px] w-[10px] shrink-0" aria-hidden="true">
                        <path d="M0 0h10L5 5z" fill="#666" />
                    </svg>
                    <input
                        type="text"
                        aria-label="Command"
                        placeholder="Type a command"
                        className="ml-2 min-w-0 flex-1 bg-transparent text-[#222] italic outline-none placeholder:text-[#858585]"
                    />
                    <svg viewBox="0 0 10 5" className="h-[5px] w-[10px] shrink-0" aria-hidden="true">
                        <path d="M0 5h10L5 0z" fill="#666" />
                    </svg>
                </div>
            </div>
        </div>
    );
}

function Cell({ icon, label, on }) {
    return (
        <button
            type="button"
            aria-label={label}
            className={`flex h-full shrink-0 items-center justify-center ${on ? 'w-7 bg-[#5f8fc3]' : 'w-[30px] bg-[#3b4453]'}`}
        >
            <Icon name={icon} />
        </button>
    );
}

function StatusBar() {
    return (
        <footer className="flex h-9 items-stretch border-t-[5px] border-[#3b4453] bg-[#222933] text-[14px] whitespace-nowrap text-[#f0f0f0]">
            <div className="flex shrink-0 items-center pl-[11px]">
                <Slash />
                <button type="button" className="w-[64px]">Model</button>
                <button
                    type="button"
                    className="-ml-px flex h-[30px] w-[60px] items-center justify-center self-start bg-[#3b4453] font-bold [clip-path:polygon(12px_0,100%_0,calc(100%-12px)_100%,0_100%)]"
                >
                    a3
                </button>
                <button type="button" aria-label="New layout" className="mr-[13px] ml-[11px]">
                    <Plus />
                </button>
                <Slash />
            </div>
            <div className="mt-[2px] ml-auto flex shrink-0 items-stretch gap-[3px]">
                <button type="button" className="w-[52px] bg-[#3b4453]">PAPER</button>
                <div className="flex gap-px">
                    <Cell icon="coords" label="Coordinates" />
                    <Cell icon="ortho" label="Ortho mode" />
                    <div className="flex w-[49px] items-center bg-[#3b4453]">
                        <Cell icon="polar" label="Polar tracking" on />
                        <span className="ml-[5px]"><Caret large /></span>
                    </div>
                    <div className="flex w-[50px] items-center bg-[#3b4453]">
                        <Cell icon="osnap" label="Object snap" />
                        <span className="ml-[5px]"><Caret large /></span>
                    </div>
                    <Cell icon="lineweight" label="Lineweight" />
                    <Cell icon="cycling" label="Selection cycling" />
                </div>
                <div className="flex">
                    <Cell icon="annoScale" label="Annotation scale" />
                    <Cell icon="annoVisible" label="Annotation visibility" />
                    <Cell icon="annoAuto" label="Auto scale" />
                </div>
                <div className="flex gap-px">
                    <div className="flex w-[50px] items-center bg-[#3b4453]">
                        <Cell icon="gear" label="Workspace" />
                        <span className="ml-[5px]"><Caret large /></span>
                    </div>
                    <Cell icon="plus" label="Annotation monitor" />
                </div>
                <button type="button" className="flex w-[97px] items-center justify-between bg-[#3b4453] pr-[5px] pl-px">
                    High Detail
                    <Caret large />
                </button>
                <div className="flex w-[84px] items-center bg-[#3b4453]">
                    <Cell icon="elevation" label="Elevation" />
                    <span className="ml-[6px]">+0.000</span>
                </div>
                <Cell icon="isolate" label="Isolate objects" />
                <div className="flex gap-[6px] bg-[#3b4453] pr-1 pl-[5px]">
                    <Cell icon="surface" label="Surface hatch" on />
                    <Cell icon="xref" label="Layer key overrides" on />
                    <div className="-ml-[5px] flex gap-1">
                        <Cell icon="trusted" label="Trusted DWG" />
                        <Cell icon="graph" label="Graphics performance" />
                        <Cell icon="layout" label="Sheet layout" />
                    </div>
                </div>
                <div className="flex">
                    <Cell icon="fullscreen" label="Clean screen" />
                    <Cell icon="menu" label="Customization" />
                </div>
            </div>
        </footer>
    );
}

export default function App() {
    const [tab, setTab] = useState('Home');

    return (
        <div className="flex h-screen flex-col overflow-hidden bg-[#222933] font-['Open_Sans','Noto_Sans',sans-serif]">
            <TitleBar />
            <RibbonTabs tab={tab} onTab={setTab} />
            <Ribbon />
            <DocTabs />
            <main className="relative min-h-0 flex-1 bg-[#8a8a8a]">
                <Drawing />
                <ViewControls />
                <CommandWindow />
            </main>
            <StatusBar />
        </div>
    );
}
